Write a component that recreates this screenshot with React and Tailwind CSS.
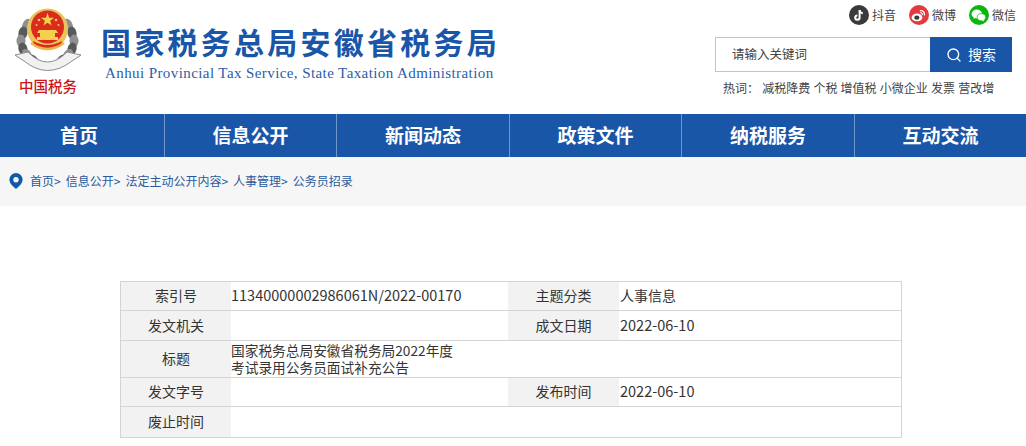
import React from "react";
import { Search } from "lucide-react";

const cjk = "font-['Noto_Sans_CJK_SC','Microsoft_YaHei',sans-serif]";

/* ─── Emblem ──────────────────────────────────────────────────── */
function Emblem() {
  const leaves = [
    [13, 17, 24], [9, 25, 12], [7, 33, 0], [9, 41, -14], [13, 47, -30], [19, 52, -48],
    [54, 17, -24], [58, 25, -12], [60, 33, 0], [58, 41, 14], [54, 47, 30], [48, 52, 48],
  ];
  return (
    <svg width="68" height="68" viewBox="0 0 68 68" className="block">
      {leaves.map(([x, y, r], i) => (
        <ellipse key={i} cx={x} cy={y} rx="4.5" ry="6.5" fill={i % 2 ? "#565a58" : "#8d918e"} transform={`rotate(${r} ${x} ${y})`} />
      ))}
      <circle cx="33.5" cy="21" r="20.5" fill="#edc25a" />
      <circle cx="33.5" cy="19" r="16.5" fill="#db2a1e" />
      <path d="M33.5 5 l1.6 4.8 h5 l-4 3 1.5 4.8 -4.1-2.9 -4.1 2.9 1.5-4.8 -4-3 h5 z" fill="#f4d04e" />
      <g fill="#f4d04e">
        <circle cx="25" cy="12" r="1.3" />
        <circle cx="42" cy="12" r="1.3" />
        <circle cx="22.5" cy="17" r="1" />
        <circle cx="44.5" cy="17" r="1" />
        <path d="M25 22 h17 l2 3 h-3 v4 h3 v3 H23 v-3 h3 v-4 h-3 z" />
      </g>
      <path d="M19 33 q14.5 8 29 0 l-1 5 q-13.5 7 -27 0 z" fill="#db2a1e" />
      <path d="M17 35 q16.5 12 33 0" fill="none" stroke="#e8b84c" strokeWidth="2.5" />
      <path d="M1 47 L14 44 Q33.5 64 53 44 L67 47 L58 53 Q33.5 72 10 53 Z" fill="#f1f2f0" stroke="#8c8f8d" strokeWidth="1" />
    </svg>
  );
}

/* ─── Small icons ─────────────────────────────────────────────── */
function Douyin() {
  return (
    <span className="w-5 h-5 rounded-full bg-[#3a3a3a] flex items-center justify-center">
      <svg width="12" height="13" viewBox="0 0 12 13" fill="none" stroke="#fff" strokeWidth="2">
        <path d="M6.6 1v7.6a2.2 2.2 0 1 1-2.2-2.2" />
        <path d="M6.6 1.4c.3 1.7 1.5 2.7 3.2 2.9" />
      </svg>
    </span>
  );
}

function Weibo() {
  return (
    <span className="w-5 h-5 rounded-full bg-[#e6393f] flex items-center justify-center">
      <svg width="15" height="13" viewBox="0 0 15 13">
        <ellipse cx="6" cy="8.4" rx="5.4" ry="3.9" fill="#fff" />
        <ellipse cx="5.8" cy="8.7" rx="2.6" ry="2.1" fill="#3a3a3a" />
        <path d="M9.4 1.6a3.6 3.6 0 0 1 4 4.3" fill="none" stroke="#fff" strokeWidth="1.3" strokeLinecap="round" />
        <path d="M9.6 3.8a1.6 1.6 0 0 1 1.8 1.9" fill="none" stroke="#fff" strokeWidth="1.1" strokeLinecap="round" />
      </svg>
    </span>
  );
}

function Wechat() {
  return (
    <span className="w-5 h-5 rounded-full bg-[#0bb70f] flex items-center justify-center">
      <svg width="15" height="13" viewBox="0 0 15 13" fill="#fff">
        <ellipse cx="5.8" cy="5" rx="5.3" ry="4.4" />
        <path d="M3 8l-.6 2 2.6-1.4z" />
        <ellipse cx="10.4" cy="8.2" rx="4.2" ry="3.5" stroke="#0bb70f" strokeWidth=".7" />
        <path d="M12.4 10.8l.6 1.6-2.2-1.2z" />
      </svg>
    </span>
  );
}

function Pin() {
  return (
    <svg width="14" height="16" viewBox="0 0 14 16" className="mr-[7px] mb-[1px]">
      <path fillRule="evenodd" d="M7 0a6.6 6.6 0 0 1 6.6 6.6C13.6 10.6 9.6 14 7 16 4.4 14 .4 10.6.4 6.6A6.6 6.6 0 0 1 7 0zm0 4a2.7 2.7 0 1 0 0 5.4A2.7 2.7 0 0 0 7 4z" fill="#0f5aa8" />
    </svg>
  );
}

/* ─── Data ────────────────────────────────────────────────────── */
const navItems = ["首页", "信息公开", "新闻动态", "政策文件", "纳税服务", "互动交流"];
const crumbs = ["首页", "信息公开", "法定主动公开内容", "人事管理"];
const hotWords = ["减税降费", "个税", "增值税", "小微企业", "发票", "营改增"];

function Label({ children }) {
  return <div className="bg-[#f2f2f2] flex items-center justify-center pb-[1px] text-[14px] text-[#333]">{children}</div>;
}

function Value({ className = "", children }) {
  return <div className={`flex items-center pb-[2px] text-[14.5px] text-[#333] ${className}`}>{children}</div>;
}

function Row({ className, children }) {
  return <div className={`grid grid-cols-[110px_277px_111px_1fr] border-b border-[#d4d4d4] ${className}`}>{children}</div>;
}

/* ─── Page ────────────────────────────────────────────────────── */
export default function App() {
  return (
    <div className={`w-[1026px] h-[446px] overflow-hidden bg-white ${cjk}`}>
      {/* Header */}
      <div className="h-[114px] flex justify-between">
        <div className="flex">
          <div className="ml-[14px] mt-[8px] flex flex-col items-center w-[68px]">
            <Emblem />
            <span className="text-[#c8161d] text-[14.5px] leading-[20px] font-medium whitespace-nowrap">中国税务</span>
          </div>
          <div className="ml-[19px] mt-[21px] flex flex-col">
            <h1 className="text-[#1a56a8] text-[30px] leading-[40px] font-bold tracking-[3.25px] whitespace-nowrap">国家税务总局安徽省税务局</h1>
            <p className="ml-[4px] mt-[2px] text-[#2a5ea8] text-[15px] leading-[20px] font-['Liberation_Serif',serif] tracking-[0.41px] whitespace-nowrap">Anhui Provincial Tax Service, State Taxation Administration</p>
          </div>
        </div>
        <div className="w-[311px] flex flex-col">
          <div className="mt-[5px] pr-[10px] flex justify-end items-center gap-[13px] text-[12px] text-[#444]">
            <span className="flex items-center gap-[3px]"><Douyin />抖音</span>
            <span className="flex items-center gap-[3px]"><Weibo />微博</span>
            <span className="flex items-center gap-[3px]"><Wechat />微信</span>
          </div>
          <div className="mt-[12px] flex h-[35px] w-[297px]">
            <div className="flex-1 border border-[#c4c4c4] border-r-0 flex items-center pl-[16px] text-[12.5px] text-[#444]">请输入关键词</div>
            <button className="w-[82px] bg-[#1a56a8] text-white flex items-center justify-center gap-[6px] text-[14px]">
              <Search size={16} strokeWidth={2} />
              搜索
            </button>
          </div>
          <div className="mt-[7px] ml-[8px] flex gap-[3.2px] text-[12px] leading-[18px] text-[#444] whitespace-nowrap">
            <span>热词：</span>
            {hotWords.map(w => <span key={w}>{w}</span>)}
          </div>
        </div>
      </div>

      {/* Nav */}
      <nav className="h-[43px] bg-[#1a56a8] grid grid-cols-[165px_172px_173px_172px_173px_171px]">
        {navItems.map((item, i) => (
          <div key={item} className={`flex items-center justify-center text-white text-[19px] font-bold ${i === 0 ? "pr-[6px]" : ""} ${i < 5 ? "border-r border-[#6f96c8]" : ""}`}>
            {item}
          </div>
        ))}
      </nav>

      {/* Breadcrumb */}
      <div className="h-[49px] bg-[#f6f6f6] flex items-center pl-[9px] pb-[1px] text-[12px] text-[#2a5a9c] whitespace-nowrap">
        <Pin />
        {crumbs.map(c => (
          <span key={c} className="mr-[5px]">{c}&gt;</span>
        ))}
        <span>公务员招录</span>
      </div>

      {/* Info table */}
      <div className="mt-[75px] mx-[120px] w-[782px] border border-b-0 border-[#d4d4d4]">
        <Row className="h-[29px]">
          <Label>索引号</Label>
          <Value>11340000002986061N/2022-00170</Value>
          <Label>主题分类</Label>
          <Value className="pl-[1px]"><span className="text-[14px]">人事信息</span></Value>
        </Row>
        <Row className="h-[30px]">
          <Label>发文机关</Label>
          <Value />
          <Label>成文日期</Label>
          <Value className="pl-[1px]">2022-06-10</Value>
        </Row>
        <div className="h-[37px] grid grid-cols-[110px_1fr] border-b border-[#d4d4d4]">
          <Label>标题</Label>
          <div className="flex flex-col justify-center pb-[1px] text-[13.7px] leading-[17px] text-[#333]">
            <span>国家税务总局安徽省税务局2022年度</span>
            <span>考试录用公务员面试补充公告</span>
          </div>
        </div>
        <Row className="h-[29px]">
          <Label>发文字号</Label>
          <Value />
          <Label>发布时间</Label>
          <Value className="pl-[1px]">2022-06-10</Value>
        </Row>
        <div className="h-[31px] grid grid-cols-[110px_1fr] border-b border-[#d4d4d4]">
          <Label>废止时间</Label>
          <Value />
        </div>
      </div>
    </div>
  );
}
